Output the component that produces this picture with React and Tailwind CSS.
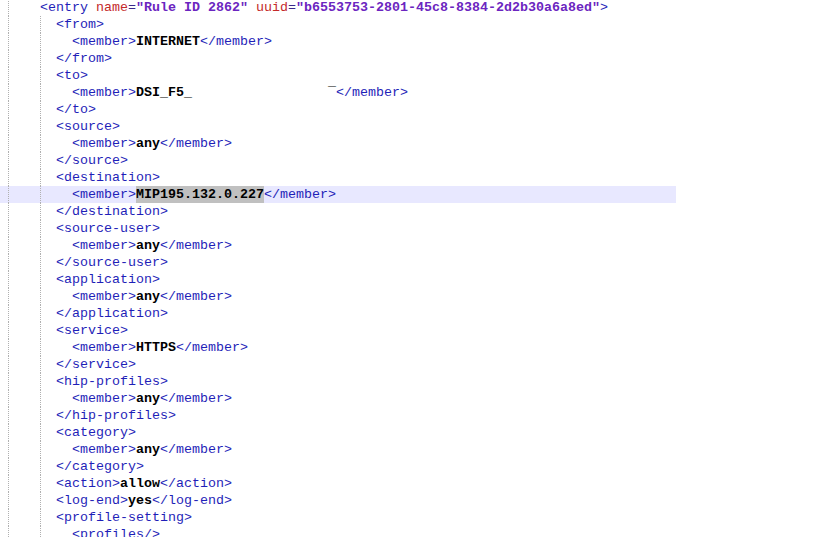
import React from "react";

const tag = (s) => ({ s, c: "text-[#1f1fb8]" });
const txt = (s) => ({ s, c: "font-bold text-black" });
const attr = (s) => ({ s, c: "text-[#c42a2a]" });
const eq = (s) => ({ s, c: "text-[#3a2a8a]" });
const val = (s) => ({ s, c: "font-bold text-[#6b25c0]" });
const sel = (s) => ({ s, c: "font-bold text-black bg-[#c0c0c0]" });

const open = (name) => [tag(`<${name}>`)];
const close = (name) => [tag(`</${name}>`)];
const member = (v, sv) => [tag("<member>"), sv ? sel(v) : txt(v), tag("</member>")];

const lines = [
  {
    level: 0,
    parts: [
      tag("<entry"),
      attr(" name"),
      eq("="),
      val('"Rule ID 2862"'),
      attr(" uuid"),
      eq("="),
      val('"b6553753-2801-45c8-8384-2d2b30a6a8ed"'),
      tag(">"),
    ],
  },
  { level: 1, parts: open("from") },
  { level: 2, parts: member("INTERNET") },
  { level: 1, parts: close("from") },
  { level: 1, parts: open("to") },
  { level: 2, parts: member("DSI_F5_                 \u00af") },
  { level: 1, parts: close("to") },
  { level: 1, parts: open("source") },
  { level: 2, parts: member("any") },
  { level: 1, parts: close("source") },
  { level: 1, parts: open("destination") },
  { level: 2, parts: member("MIP195.132.0.227", true), current: true },
  { level: 1, parts: close("destination") },
  { level: 1, parts: open("source-user") },
  { level: 2, parts: member("any") },
  { level: 1, parts: close("source-user") },
  { level: 1, parts: open("application") },
  { level: 2, parts: member("any") },
  { level: 1, parts: close("application") },
  { level: 1, parts: open("service") },
  { level: 2, parts: member("HTTPS") },
  { level: 1, parts: close("service") },
  { level: 1, parts: open("hip-profiles") },
  { level: 2, parts: member("any") },
  { level: 1, parts: close("hip-profiles") },
  { level: 1, parts: open("category") },
  { level: 2, parts: member("any") },
  { level: 1, parts: close("category") },
  { level: 1, parts: [tag("<action>"), txt("allow"), tag("</action>")] },
  { level: 1, parts: [tag("<log-end>"), txt("yes"), tag("</log-end>")] },
  { level: 1, parts: open("profile-setting") },
  { level: 2, parts: [tag("<profiles/>")] },
];

function Line({ line }) {
  return (
    <div
      className={`flex h-[17px] w-[676px] whitespace-pre ${
        line.current ? "bg-[#e8e8ff]" : ""
      }`}
    >
      <span className="ml-[8px] w-[32px] shrink-0 border-l border-dotted border-[#b0b0b0]" />
      {line.level > 0 ? (
        <span className="w-[16px] shrink-0 border-l border-dotted border-[#b0b0b0]" />
      ) : null}
      {line.level > 1 ? <span className="w-[16px] shrink-0" /> : null}
      {line.parts.map((p, i) => (
        <span key={i} className={p.c}>
          {p.s}
        </span>
      ))}
    </div>
  );
}

export default function App() {
  return (
    <div className="h-[537px] w-[819px] overflow-hidden bg-white font-['Liberation_Mono','Courier_New',monospace] text-[13.33px] leading-[17px]">
      <div className="-mt-px flex flex-col">
        {lines.map((line, i) => (
          <Line key={i} line={line} />
        ))}
      </div>
    </div>
  );
}
